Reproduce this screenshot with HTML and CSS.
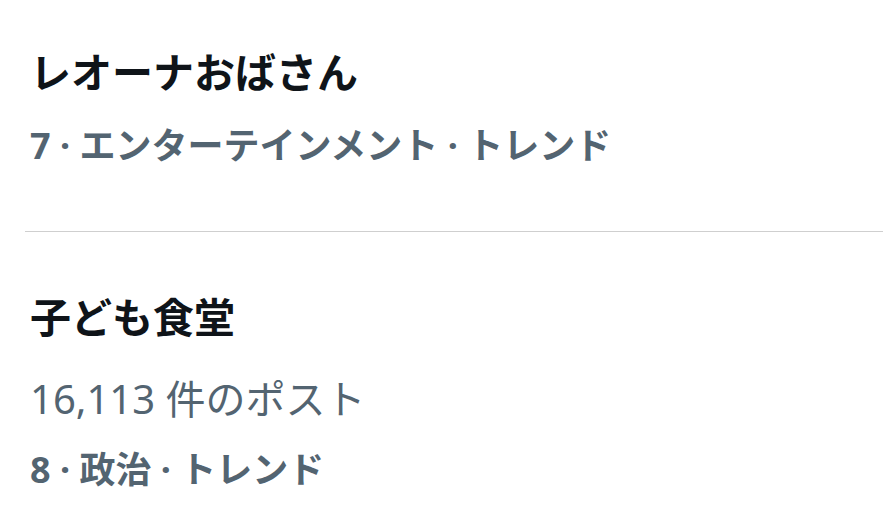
FILE: index.html
```html
<!DOCTYPE html>
<html lang="ja">
    <head>
        <meta charset="utf-8">
        <link rel="stylesheet" href="styles.css">
        <title>トレンド</title>
    </head>

    <body>
        <div id="trends">
            <!-- trend 7 -->
            <div class="trend first">
                <p class="name">レオーナおばさん</p>
                <p class="meta">7 · エンターテインメント · トレンド</p>
            </div>

            <!-- trend 8 -->
            <div class="trend second">
                <p class="name">子ども食堂</p>
                <p class="count">16,113 件のポスト</p>
                <p class="meta">8 · 政治 · トレンド</p>
            </div>
        </div>
    </body>
</html>
```

FILE: styles.css
```css
* {
    box-sizing: border-box;
    margin: 0;
    padding: 0;
}
html {
    background: #fff;
}
body {
    font-family: 'Noto Sans', 'Noto Sans CJK JP', sans-serif;
    color: #0f1419;
}
#trends {
    width: 883px;
}
.trend {
    padding-left: 30px;
}
.trend.first {
    padding-top: 47px;
    padding-bottom: 61px;
}
.trend.second {
    padding-top: 60px;
    border-top: 1px solid #cfcfcf;
    margin-left: 25px;
    padding-left: 5px;
}
.name {
    font-size: 41px;
    font-weight: 700;
    line-height: 50px;
    color: #0f1419;
}
.count {
    margin-top: 31px;
    font-size: 40px;
    font-weight: 400;
    line-height: 52px;
    color: #536471;
}
.meta {
    margin-top: 25px;
    font-size: 36px;
    font-weight: 700;
    line-height: 48px;
    color: #536471;
}
.second .meta {
    margin-top: 21px;
}
```
